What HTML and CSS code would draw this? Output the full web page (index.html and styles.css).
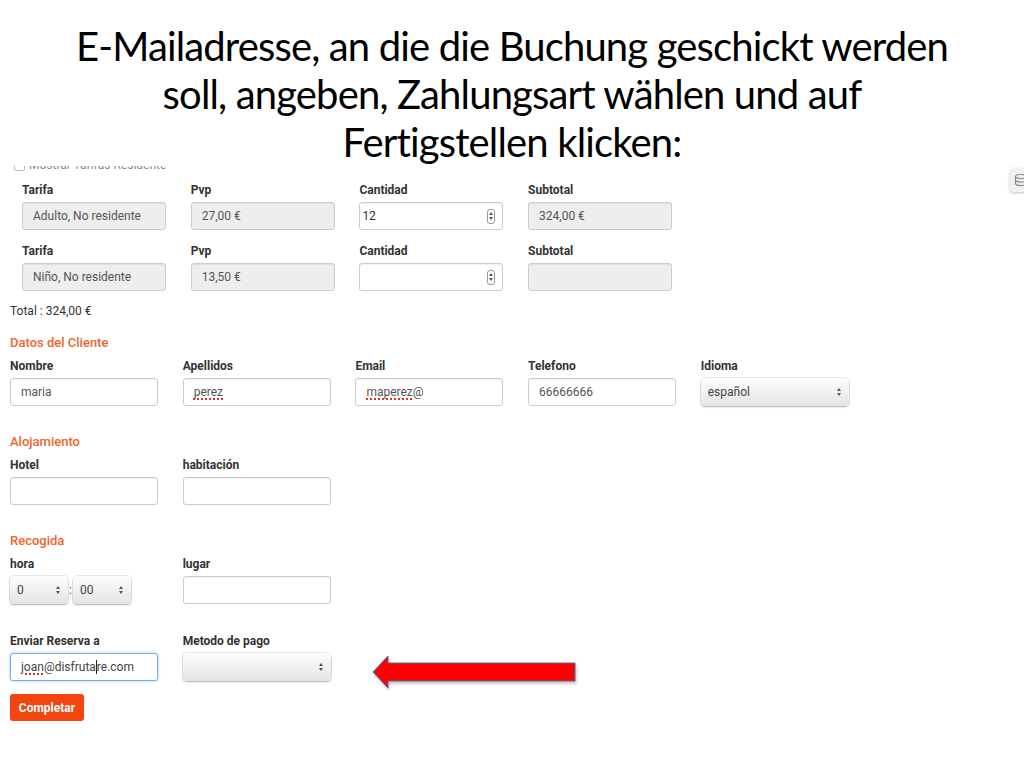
FILE: index.html
```html
<!DOCTYPE html>
<html lang="es">
<head>
<meta charset="utf-8">
<title>Reserva</title>
<link rel="stylesheet" href="styles.css">
</head>
<body>
<h1 class="title">E-Mailadresse, an die die Buchung geschickt werden<br>soll, angeben, Zahlungsart wählen und auf<br>Fertigstellen klicken:</h1>

<div class="clip">
  <div class="check-row"><span class="checkbox"></span><span>Mostrar Tarifas Residente</span></div>
</div>

<div class="rates">
  <div class="cell"><div class="label">Tarifa</div><div class="field ro">Adulto, No residente</div></div>
  <div class="cell"><div class="label">Pvp</div><div class="field ro">27,00 €</div></div>
  <div class="cell"><div class="label">Cantidad</div><div class="field num"><span>12</span><span class="spin"><i class="up"></i><i class="down"></i></span></div></div>
  <div class="cell"><div class="label">Subtotal</div><div class="field ro">324,00 €</div></div>
  <div class="cell"><div class="label">Tarifa</div><div class="field ro">Niño, No residente</div></div>
  <div class="cell"><div class="label">Pvp</div><div class="field ro">13,50 €</div></div>
  <div class="cell"><div class="label">Cantidad</div><div class="field num"><span></span><span class="spin"><i class="up"></i><i class="down"></i></span></div></div>
  <div class="cell"><div class="label">Subtotal</div><div class="field ro"></div></div>
</div>

<div class="form">
  <div class="total">Total : 324,00 €</div>

  <h2 class="heading first">Datos del Cliente</h2>
  <div class="grid five">
    <div class="cell"><div class="label">Nombre</div><div class="field">maria</div></div>
    <div class="cell"><div class="label">Apellidos</div><div class="field"><span class="spell">perez</span></div></div>
    <div class="cell"><div class="label">Email</div><div class="field"><span class="spell">maperez</span>@</div></div>
    <div class="cell"><div class="label">Telefono</div><div class="field">66666666</div></div>
    <div class="cell"><div class="label">Idioma</div><div class="select"><span>español</span><span class="arrows"><i class="up"></i><i class="down"></i></span></div></div>
  </div>

  <h2 class="heading">Alojamiento</h2>
  <div class="grid five">
    <div class="cell"><div class="label">Hotel</div><div class="field"></div></div>
    <div class="cell"><div class="label">habitación</div><div class="field"></div></div>
  </div>

  <h2 class="heading">Recogida</h2>
  <div class="grid five">
    <div class="cell"><div class="label">hora</div>
      <div class="time">
        <div class="select small"><span>0</span><span class="arrows"><i class="up"></i><i class="down"></i></span></div>
        <span class="colon">:</span>
        <div class="select small"><span>00</span><span class="arrows"><i class="up"></i><i class="down"></i></span></div>
      </div>
    </div>
    <div class="cell"><div class="label">lugar</div><div class="field"></div></div>
  </div>

  <div class="grid five send">
    <div class="cell"><div class="label">Enviar Reserva a</div><div class="field focus"><span class="spell">joan</span>@disfruta<span class="caret"></span>re.com</div></div>
    <div class="cell"><div class="label">Metodo de pago</div><div class="select"><span></span><span class="arrows"><i class="up"></i><i class="down"></i></span></div></div>
  </div>

  <button class="btn" type="button">Completar</button>
</div>

<svg class="pointer" width="212" height="42" viewBox="0 0 212 42" aria-hidden="true">
  <defs>
    <filter id="sh" x="-10%" y="-30%" width="120%" height="160%">
      <feDropShadow dx="1" dy="2" stdDeviation="1.5" flood-color="#000" flood-opacity="0.25"/>
    </filter>
  </defs>
  <polygon points="3,20 18,4 18,11 205,11 205,29 18,29 18,36" fill="#ff0000" stroke="#4f6a9a" stroke-width="1" filter="url(#sh)"/>
</svg>

<div class="side-icon" aria-hidden="true">
  <svg width="14" height="14" viewBox="0 0 14 14">
    <ellipse cx="7" cy="3.5" rx="5.5" ry="2" fill="none" stroke="#888" stroke-width="1.2"/>
    <path d="M1.5 3.5v7c0 1.1 2.5 2 5.5 2s5.5-.9 5.5-2v-7" fill="none" stroke="#888" stroke-width="1.2"/>
    <path d="M1.5 7c0 1.1 2.5 2 5.5 2s5.5-.9 5.5-2" fill="none" stroke="#888" stroke-width="1.2"/>
  </svg>
</div>
</body>
</html>
```

FILE: styles.css
```css
* { box-sizing: border-box; }

body {
  margin: 0;
  width: 1024px;
  height: 768px;
  overflow: hidden;
  position: relative;
  background: #fff;
  font-family: Roboto, "Liberation Sans", Arial, sans-serif;
  font-size: 12px;
  color: #333;
}

.title {
  margin: 0;
  padding-top: 22px;
  height: 166px;
  font-family: Lato, "Open Sans", "Liberation Sans", sans-serif;
  font-weight: 400;
  font-size: 40px;
  letter-spacing: -0.85px;
  line-height: 48px;
  text-align: center;
  color: #000;
}

.clip {
  height: 6px;
  overflow: hidden;
}

.check-row {
  margin-top: -7px;
  padding-left: 14px;
  display: flex;
  align-items: center;
  gap: 4px;
  height: 13px;
  color: #888;
  font-size: 12px;
  line-height: 13px;
}

.checkbox {
  width: 11px;
  height: 11px;
  border: 1px solid #bbb;
  border-radius: 2px;
  background: #fff;
}

.rates {
  margin-top: 11px;
  padding-left: 22px;
  display: grid;
  grid-template-columns: repeat(4, 144px);
  column-gap: 24.7px;
  row-gap: 14px;
}

.cell {
  display: flex;
  flex-direction: column;
  gap: 4px;
}

.label {
  font-weight: 700;
  line-height: 15px;
  height: 15px;
  color: #333;
  white-space: nowrap;
}

.field {
  height: 28px;
  border: 1px solid #ccc;
  border-radius: 3px;
  background: #fff;
  box-shadow: inset 0 1px 1px rgba(0,0,0,0.06);
  display: flex;
  align-items: center;
  padding: 0 10px;
  color: #555;
  white-space: nowrap;
}

.field.ro {
  background: #eee;
  padding-left: 10px;
}

.field.num {
  padding: 0 7px 0 2px;
  justify-content: space-between;
  color: #333;
}

.spin {
  width: 8px;
  height: 15px;
  border: 1px solid #999;
  border-radius: 3px;
  display: flex;
  flex-direction: column;
  align-items: center;
  justify-content: center;
  gap: 2px;
}

.up, .down {
  display: block;
  width: 0;
  height: 0;
  border-left: 2.5px solid transparent;
  border-right: 2.5px solid transparent;
}
.up { border-bottom: 3px solid #555; }
.down { border-top: 3px solid #555; }

.form {
  padding-left: 10px;
}

.total {
  margin-top: 13px;
  line-height: 15px;
  color: #333;
}

.heading {
  margin: 28px 0 9px;
  font-size: 13px;
  font-weight: 500;
  line-height: 15px;
  color: #f0652a;
}
.heading.first { margin-top: 16px; }

.grid.five {
  display: grid;
  grid-template-columns: repeat(5, 148px);
  column-gap: 24.7px;
}

.grid.send { margin-top: 30px; }

.select {
  height: 28px;
  border-radius: 4px;
  background: linear-gradient(#fdfdfd, #e4e4e4);
  box-shadow: 0 0 0 1px rgba(0,0,0,0.08), 0 1px 2px rgba(0,0,0,0.25);
  display: flex;
  align-items: center;
  justify-content: space-between;
  padding: 0 8px 0 7px;
  color: #444;
}

.arrows {
  display: flex;
  flex-direction: column;
  gap: 2px;
}

.time {
  display: flex;
  align-items: center;
  height: 28px;
}
.select.small {
  width: 58px;
}
.colon {
  width: 5px;
  text-align: center;
  color: #555;
}

.spell {
  text-decoration: underline dotted #e0302a;
  text-underline-offset: 2px;
  text-decoration-thickness: 1.5px;
}

.field.focus {
  border-color: #74aee4;
  box-shadow: 0 0 3px rgba(90,160,230,0.6);
  color: #444;
}

.caret {
  display: inline-block;
  width: 1px;
  height: 14px;
  background: #222;
}

.btn {
  margin-top: 13px;
  height: 27px;
  width: 74px;
  border: 0;
  border-radius: 3px;
  background: #f4440f;
  color: #fff;
  font-family: Roboto, "Liberation Sans", Arial, sans-serif;
  font-size: 12px;
  font-weight: 700;
  padding: 0;
}

.pointer {
  position: absolute;
  left: 370px;
  top: 652px;
}

.side-icon {
  position: absolute;
  left: 1010px;
  top: 168px;
  width: 24px;
  height: 24px;
  border-radius: 4px;
  background: #f1f1f1;
  box-shadow: 0 1px 3px rgba(0,0,0,0.25);
  display: flex;
  align-items: center;
  padding-left: 4px;
}
```
